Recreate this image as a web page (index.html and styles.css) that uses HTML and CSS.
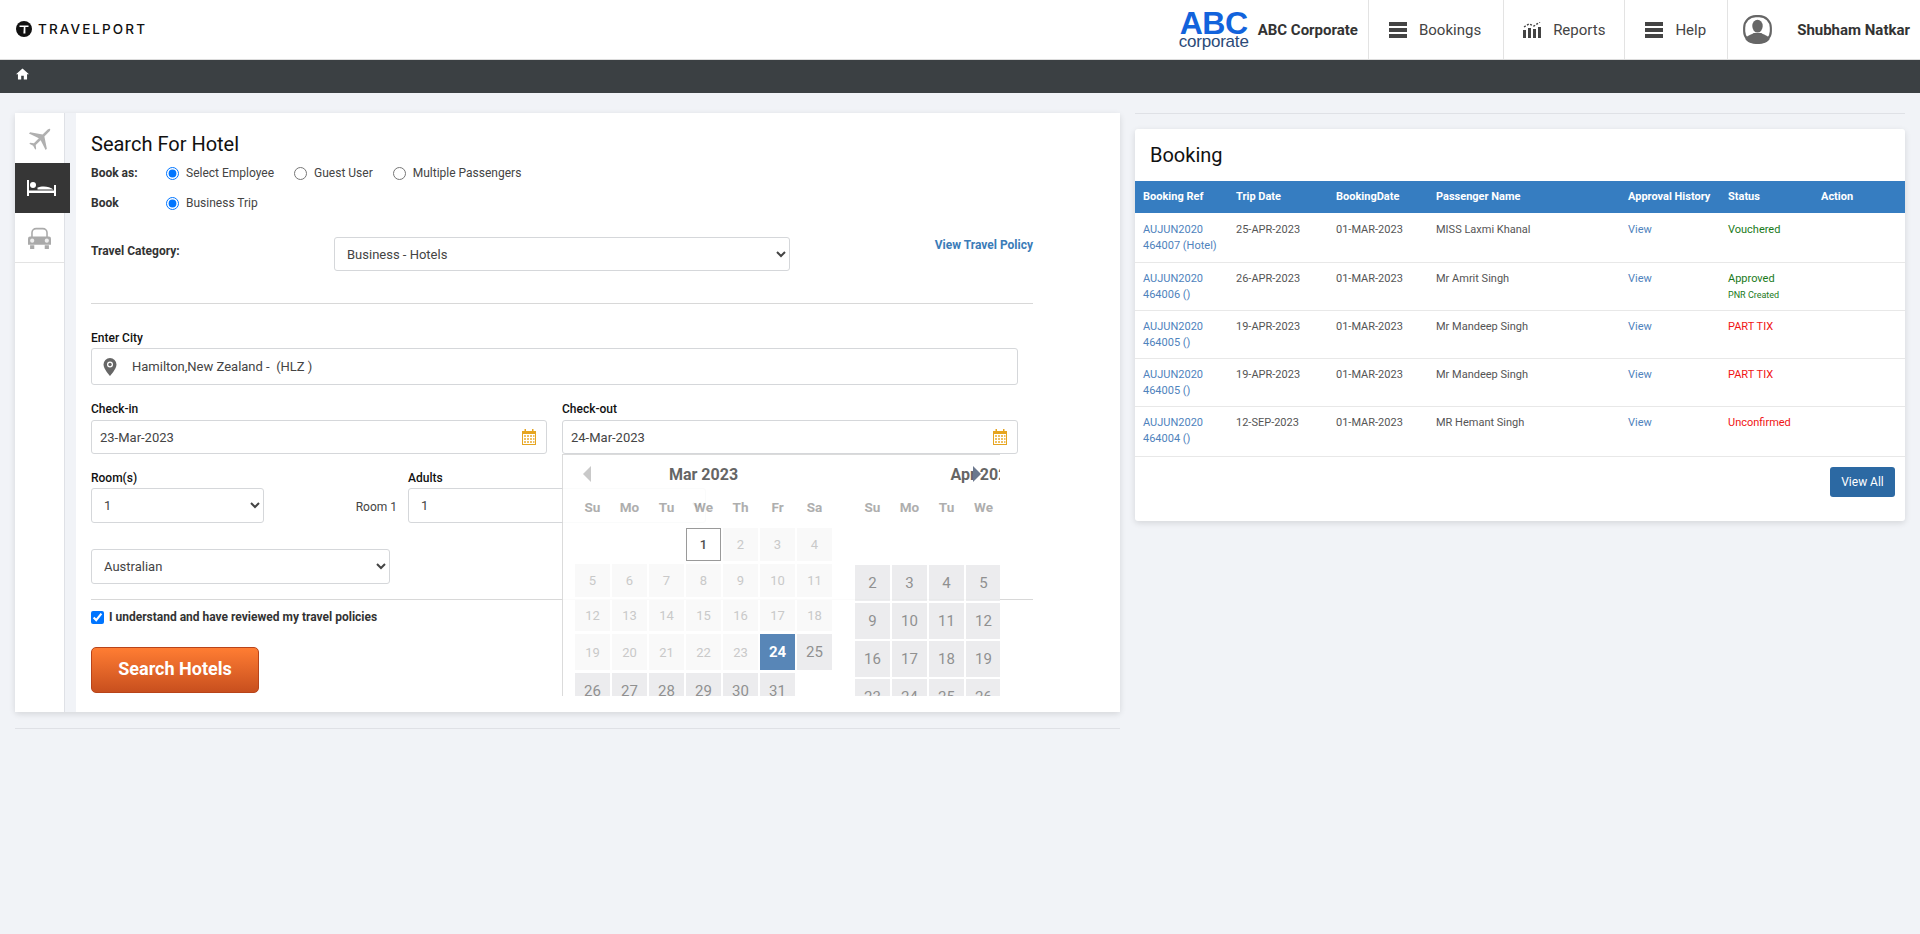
FILE: index.html
```html
<!DOCTYPE html>
<html lang="en">
<head>
<meta charset="utf-8">
<title>Search For Hotel</title>
<link rel="stylesheet" href="styles.css">
</head>
<body>
<header class="topbar">
  <div class="brand">
    <svg class="brand-mark" viewBox="0 0 16 16"><circle cx="8" cy="8" r="8" fill="#111"/><path d="M3.5 4.5h9v1.6H9.4v6.4H7.4l.4-6.4H3.5z" fill="#fff"/></svg>
    <span class="brand-name">TRAVELPORT</span>
  </div>
  <div class="top-right">
    <div class="corp">
      <div class="corp-logo"><span class="abc">ABC</span><span class="corporate">corporate</span></div>
      <span class="corp-name">ABC Corporate</span>
    </div>
    <a class="nav-item nav-bookings"><svg class="nav-icon" viewBox="0 0 18 16"><path d="M0 0h18v4H0zM0 6h18v4H0zM0 12h18v4H0z" fill="#444"/></svg>Bookings</a>
    <a class="nav-item nav-reports"><svg class="nav-icon" viewBox="0 0 18 16"><path d="M0 8h3v8H0zM5 6h3v10H5zM10 7h3v9h-3zM15 5h3v11h-3z" fill="#444"/><path d="M1 5l5-3 5 2 6-4" fill="none" stroke="#444" stroke-width="1.4" stroke-dasharray="2 1.5"/></svg>Reports</a>
    <a class="nav-item nav-help"><svg class="nav-icon" viewBox="0 0 18 16"><path d="M0 0h18v4H0zM0 6h18v4H0zM0 12h18v4H0z" fill="#444"/></svg>Help</a>
    <div class="user">
      <svg class="avatar" viewBox="0 0 30 30"><rect x="1.2" y="1.2" width="27.6" height="27.6" rx="12" fill="#fff" stroke="#666" stroke-width="2.2"/><ellipse cx="15" cy="11.5" rx="5.4" ry="6.6" fill="#666"/><path d="M2.5 25c1-4 6-4.500 8.500-6.500h8c2.500 2 7.500 2.500 8.500 6.500-2 3-5 3.800-7 3.800H9.500c-2 0-5-.8-7-3.800z" fill="#666"/></svg>
      <span class="user-name">Shubham Natkar</span>
    </div>
  </div>
</header>
<div class="crumbbar">
  <svg class="home" viewBox="2 3 20 17"><path d="M10 20v-6h4v6h5v-8h3L12 3 2 12h3v8z" fill="#fff"/></svg>
</div>

<main class="page">
  <section class="left-col">
    <div class="search-card">
      <nav class="tabs">
        <a class="tab"><svg class="i-plane" viewBox="0 0 24 24"><path transform="rotate(45 12 12)" d="M12 1c.8 0 1.100 1.500 1.100 3v5l9 6v1.500l-9-3v6l2.500 2v1l-3.600-1-3.600 1v-1l2.500-2v-6l-9 3V15l9-6V4c0-1.500.3-3 1.100-3z" fill="#b0b0b0"/></svg></a>
        <a class="tab tab-active"><svg class="i-bed" viewBox="0 0 29 16"><path d="M0 0h2v16H0zM27 5h2v11h-2zM0 10.500h29v2.500H0z" fill="#fff"/><circle cx="6" cy="5" r="3" fill="#fff"/><path d="M10.500 7.500C14 6 22 5.500 26.500 9.500H10.500z" fill="#fff"/></svg></a>
        <a class="tab"><svg class="i-car" viewBox="0 0 22 22"><path d="M3.800 11V6.500A4 4 0 0 1 7.800 2.500h6.400a4 4 0 0 1 4 4V11" fill="none" stroke="#aaa" stroke-width="1.500"/><path d="M2 10h18a2 2 0 0 1 2 2v6H0v-6a2 2 0 0 1 2-2z" fill="#aaa"/><circle cx="4" cy="14" r="2" fill="#eee"/><circle cx="18" cy="14" r="2" fill="#eee"/><path d="M2 18.500h4V22H2zM16 18.500h4V22h-4z" fill="#aaa"/></svg></a>
      </nav>
      <form class="form">
        <h2 class="form-title">Search For Hotel</h2>
        <div class="radio-row">
          <span class="radio-label">Book as:</span>
          <label class="radio"><input type="radio" name="who" checked>Select Employee</label>
          <label class="radio"><input type="radio" name="who">Guest User</label>
          <label class="radio"><input type="radio" name="who">Multiple Passengers</label>
        </div>
        <div class="radio-row radio-row-2">
          <span class="radio-label">Book</span>
          <label class="radio"><input type="radio" name="trip" checked>Business Trip</label>
        </div>
        <div class="category-row">
          <span class="category-label">Travel Category:</span>
          <select class="control category-select"><option>Business - Hotels</option></select>
          <a class="policy-link">View Travel Policy</a>
        </div>
        <hr class="rule rule-top">
        <label class="field-label city-label">Enter City</label>
        <div class="control city-input">
          <svg class="i-pin" viewBox="0 0 14 18"><path fill-rule="evenodd" d="M7 0a6.500 6.500 0 0 1 6.500 6.500C13.500 11 7 18 7 18S.5 11 .5 6.500A6.500 6.500 0 0 1 7 0zm0 3.500a3 3 0 1 0 0 6 3 3 0 0 0 0-6z" fill="#666"/><circle cx="7" cy="6.500" r="1.700" fill="#666"/></svg>
          <span>Hamilton,New Zealand -&nbsp; (HLZ )</span>
        </div>
        <div class="dates">
          <div class="date-col">
            <label class="field-label">Check-in</label>
            <div class="control date-input"><span>23-Mar-2023</span>
              <svg class="i-cal" viewBox="0 0 14 16"><path fill-rule="evenodd" d="M0 2h2.500V0h1.500v2h6V0h1.500v2H14v14H0zM1 5v10h12V5z" fill="#e6a520"/><path d="M2 6h2v2H2zM5 6h2v2H5zM8 6h2v2H8zM11 6h1.500v2H11zM2 9h2v2H2zM5 9h2v2H5zM8 9h2v2H8zM11 9h1.500v2H11zM2 12h2v2H2zM5 12h2v2H5zM8 12h2v2H8zM11 12h1.500v2H11z" fill="#efc060"/></svg>
            </div>
          </div>
          <div class="date-col checkout">
            <label class="field-label">Check-out</label>
            <div class="control date-input"><span>24-Mar-2023</span>
              <svg class="i-cal" viewBox="0 0 14 16"><path fill-rule="evenodd" d="M0 2h2.500V0h1.500v2h6V0h1.500v2H14v14H0zM1 5v10h12V5z" fill="#e6a520"/><path d="M2 6h2v2H2zM5 6h2v2H5zM8 6h2v2H8zM11 6h1.500v2H11zM2 9h2v2H2zM5 9h2v2H5zM8 9h2v2H8zM11 9h1.500v2H11zM2 12h2v2H2zM5 12h2v2H5zM8 12h2v2H8zM11 12h1.500v2H11z" fill="#efc060"/></svg>
            </div>
            <div class="picker">
              <span class="arrow arrow-prev"></span>
              <span class="arrow arrow-next"></span>
              <div class="month">
                <div class="month-title">Mar 2023</div>
                <div class="weekdays"><span>Su</span><span>Mo</span><span>Tu</span><span>We</span><span>Th</span><span>Fr</span><span>Sa</span></div>
                <div class="days days-mar">
                  <span></span><span></span><span></span>
                  <span class="today">1</span><span class="off">2</span><span class="off">3</span><span class="off">4</span>
                  <span class="off">5</span><span class="off">6</span><span class="off">7</span><span class="off">8</span><span class="off">9</span><span class="off">10</span><span class="off">11</span>
                  <span class="off">12</span><span class="off">13</span><span class="off">14</span><span class="off">15</span><span class="off">16</span><span class="off">17</span><span class="off">18</span>
                  <span class="off">19</span><span class="off">20</span><span class="off">21</span><span class="off">22</span><span class="off">23</span><span class="sel">24</span><span class="on">25</span>
                  <span class="on">26</span><span class="on">27</span><span class="on">28</span><span class="on">29</span><span class="on">30</span><span class="on">31</span><span></span>
                </div>
              </div>
              <div class="month">
                <div class="month-title">Apr 2023</div>
                <div class="weekdays"><span>Su</span><span>Mo</span><span>Tu</span><span>We</span><span>Th</span><span>Fr</span><span>Sa</span></div>
                <div class="days days-apr">
                  <span></span><span></span><span></span><span></span><span></span><span></span><span class="on">1</span>
                  <span class="on">2</span><span class="on">3</span><span class="on">4</span><span class="on">5</span><span class="on">6</span><span class="on">7</span><span class="on">8</span>
                  <span class="on">9</span><span class="on">10</span><span class="on">11</span><span class="on">12</span><span class="on">13</span><span class="on">14</span><span class="on">15</span>
                  <span class="on">16</span><span class="on">17</span><span class="on">18</span><span class="on">19</span><span class="on">20</span><span class="on">21</span><span class="on">22</span>
                  <span class="on">23</span><span class="on">24</span><span class="on">25</span><span class="on">26</span><span class="on">27</span><span class="on">28</span><span class="on">29</span>
                </div>
              </div>
            </div>
          </div>
        </div>
        <div class="rooms">
          <label class="field-label rooms-l1">Room(s)</label>
          <label class="field-label rooms-l2">Adults</label>
          <select class="control rooms-select"><option>1</option></select>
          <span class="room-name">Room 1</span>
          <select class="control rooms-select"><option>1</option></select>
        </div>
        <select class="control nationality"><option>Australian</option></select>
        <hr class="rule rule-bottom">
        <label class="policy-check"><input type="checkbox" checked>I understand and have reviewed my travel policies</label>
        <button type="button" class="search-btn">Search Hotels</button>
      </form>
    </div>
    <hr class="page-rule">
  </section>

  <section class="right-col">
    <hr class="page-rule page-rule-top">
    <div class="booking-card">
      <h2 class="booking-title">Booking</h2>
      <table class="booking-table">
        <colgroup><col class="c1"><col class="c2"><col class="c3"><col class="c4"><col class="c5"><col class="c6"><col class="c7"></colgroup>
        <thead>
          <tr><th>Booking Ref</th><th>Trip Date</th><th>BookingDate</th><th>Passenger Name</th><th>Approval History</th><th>Status</th><th>Action</th></tr>
        </thead>
        <tbody>
          <tr><td><a>AUJUN2020<br>464007 (Hotel)</a></td><td>25-APR-2023</td><td>01-MAR-2023</td><td>MISS Laxmi Khanal</td><td><a>View</a></td><td class="green">Vouchered</td><td></td></tr>
          <tr><td><a>AUJUN2020<br>464006 ()</a></td><td>26-APR-2023</td><td>01-MAR-2023</td><td>Mr Amrit Singh</td><td><a>View</a></td><td class="green">Approved<br><small>PNR Created</small></td><td></td></tr>
          <tr><td><a>AUJUN2020<br>464005 ()</a></td><td>19-APR-2023</td><td>01-MAR-2023</td><td>Mr Mandeep Singh</td><td><a>View</a></td><td class="red">PART TIX</td><td></td></tr>
          <tr><td><a>AUJUN2020<br>464005 ()</a></td><td>19-APR-2023</td><td>01-MAR-2023</td><td>Mr Mandeep Singh</td><td><a>View</a></td><td class="red">PART TIX</td><td></td></tr>
          <tr><td><a>AUJUN2020<br>464004 ()</a></td><td>12-SEP-2023</td><td>01-MAR-2023</td><td>MR Hemant Singh</td><td><a>View</a></td><td class="red">Unconfirmed</td><td></td></tr>
        </tbody>
      </table>
      <div class="booking-foot"><button type="button" class="view-all">View All</button></div>
    </div>
  </section>
</main>
</body>
</html>
```
FILE: styles.css
```css
* { box-sizing: border-box; }
html, body { margin: 0; padding: 0; }
body {
  min-height: 934px;
  background: #f1f3f7;
  font-family: Roboto, "Liberation Sans", sans-serif;
  font-size: 12px;
  color: #333;
}

/* top bar */
.topbar {
  display: flex;
  align-items: stretch;
  justify-content: space-between;
  height: 60px;
  background: #fff;
  border-bottom: 1px solid #dcdcdc;
}
.brand { display: flex; align-items: center; gap: 6px; padding-left: 16px; padding-bottom: 1px; }
.brand-mark { width: 16px; height: 16px; }
.brand-name {
  font-family: Inter, Roboto, sans-serif;
  font-weight: 500;
  font-size: 13.5px;
  letter-spacing: 2.1px;
  color: #111;
}
.top-right { display: flex; align-items: stretch; }
.corp { display: flex; align-items: center; padding-right: 10px; border-right: 1px solid #e3e3e3; }
.corp-logo { display: flex; flex-direction: column; align-items: center; width: 72px; margin-right: 8px; font-family: "Liberation Sans", Arial, sans-serif; }
.abc { font-size: 32px; line-height: 23px; font-weight: 700; color: #1263dc; margin-top: 2px; letter-spacing: -.5px; }
.corporate { font-size: 17px; line-height: 14px; color: #2b4a78; letter-spacing: -.2px; }
.corp-name { font-size: 15px; font-weight: 700; color: #333; }
.nav-item {
  display: flex;
  align-items: center;
  gap: 12px;
  padding: 0 21px 0 20px;
  font-size: 15px;
  color: #444;
  border-right: 1px solid #e3e3e3;
}
.nav-bookings { padding: 0 22px 0 20px; }
.nav-reports { padding: 0 19px; }
.nav-icon { width: 18px; height: 16px; }
.user { display: flex; align-items: center; padding: 0 10px 0 15px; }
.avatar { width: 29px; height: 29px; margin-right: 25px; }
.user-name { font-size: 15px; font-weight: 700; color: #333; }

.crumbbar {
  display: flex;
  align-items: flex-start;
  height: 33px;
  padding: 8px 0 0 16px;
  background: #3b4043;
}
.home { width: 13px; height: 12px; }

/* page */
.page {
  display: flex;
  align-items: flex-start;
  padding: 20px 15px 0;
  gap: 15px;
}
.left-col { width: 1105px; flex: none; }
.right-col { width: 770px; flex: none; }

.page-rule { border: 0; height: 1px; margin: 16px 0 0; background: #dfe1e6; }
.page-rule-top { margin: 0 0 15px; }

/* search card */
.search-card {
  display: flex;
  height: 599px;
  background: #f1f3f7;
  border-radius: 3px;
  box-shadow: 0 2px 6px rgba(0, 0, 0, .12);
}
.tabs {
  flex: none;
  width: 50px;
  background: #fff;
  border-right: 1px solid #dfe1e6;
  margin-right: 11px;
}
.tab {
  display: flex;
  align-items: center;
  justify-content: center;
  height: 50px;
}
.tab:last-child { border-bottom: 1px solid #e3e3e3; }
.tab-active { width: 55px; background: #363636; padding-right: 2px; }
.i-plane { width: 28px; height: 28px; margin-left: 2px; }
.i-bed { width: 29px; height: 16px; }
.i-car { width: 23px; height: 23px; }

.form {
  flex: 1;
  min-width: 0;
  background: #fff;
  padding: 19px 87px 0 15px;
}
.form-title { margin: 0; font-size: 20px; line-height: 24px; font-weight: 400; color: #111; }
.radio-row { display: flex; align-items: center; height: 22px; margin-top: 6px; }
.radio-row-2 { margin-top: 8px; }
.radio-label { width: 75px; font-weight: 700; color: #333; }
.radio { display: flex; align-items: center; margin-right: 20px; color: #444; }
.radio input { width: 13px; height: 13px; margin: 0 7px 0 0; }

.control {
  display: block;
  border: 1px solid #d5d7da;
  border-radius: 3px;
  background: #fff;
  font-family: inherit;
  font-size: 13px;
  color: #444;
}
select.control { padding: 0 8px; }

.category-row { display: flex; align-items: center; margin-top: 23px; }
.category-label { width: 243px; font-weight: 700; color: #333; margin-bottom: 6px; }
.category-select { width: 456px; height: 34px; }
.policy-link { margin-left: auto; margin-bottom: 19px; font-weight: 700; color: #3b7cb8; }

.rule { border: 0; height: 1px; background: #d8d8d8; margin: 0; }
.rule-top { margin-top: 32px; }
.rule-bottom { margin-top: 15px; }

.field-label { display: block; font-weight: 500; line-height: 16px; color: #111; }
.city-label { margin-top: 26px; }
.city-input {
  display: flex;
  align-items: center;
  width: 927px;
  height: 37px;
  margin-top: 2px;
  padding-left: 11px;
}
.i-pin { width: 14px; height: 18px; margin-right: 15px; }

.dates { display: flex; gap: 15px; width: 927px; margin-top: 16px; }
.date-col { flex: 1; min-width: 0; }
.checkout { position: relative; z-index: 2; }
.date-input {
  display: flex;
  align-items: center;
  justify-content: space-between;
  height: 34px;
  margin-top: 3px;
  padding: 0 10px 0 8px;
}
.i-cal { width: 14px; height: 16px; }

/* date picker */
.picker {
  position: absolute;
  top: 53px;
  left: 0;
  display: flex;
  gap: 23px;
  width: 438px;
  height: 242px;
  padding-left: 12px;
  overflow: hidden;
  background: #fff;
  border-left: 1px solid #d8d8d8;
  border-top: 1px solid #d8d8d8;
  opacity: .9;
}
.month { flex: none; width: 257px; }
.month-title { height: 39px; padding-top: 10px; line-height: 20px; text-align: center; font-size: 16px; font-weight: 700; color: #555; }
.weekdays { display: grid; grid-template-columns: repeat(7, 35px); column-gap: 2px; height: 26px; line-height: 26px; text-align: center; font-size: 13.5px; font-weight: 700; color: #a6a6a6; }
.days { display: grid; grid-template-columns: repeat(7, 35px); column-gap: 2px; text-align: center; }
.days span { display: flex; align-items: center; justify-content: center; }
.days-mar { margin-top: 8px; grid-template-rows: 33px 33px 31px 36px 36px; row-gap: 3px; }
.days-apr { margin-top: 7px; grid-auto-rows: 36px; row-gap: 2px; }
.off { background: #f9f9f9; color: #c4c4c4; font-size: 13px; }
.on { background: #eaebed; color: #858585; font-size: 15px; }
.sel { background: #4679b0; color: #fff; font-size: 15px; font-weight: 700; }
.today { border: 1px solid #909090; color: #3c3c3c; font-size: 13px; font-weight: 500; }
.arrow {
  position: absolute;
  top: 11px;
  width: 0;
  height: 0;
  border-top: 8px solid transparent;
  border-bottom: 8px solid transparent;
}
.arrow-prev { left: 20px; border-right: 8px solid #c4c4c4; }
.arrow-next { left: 410px; border-left: 8px solid #5c6a82; }

/* rooms */
.rooms {
  display: grid;
  grid-template-columns: 173px 144px 298px;
  align-items: center;
  margin-top: 16px;
}
.rooms-l1 { grid-column: 1; }
.rooms-l2 { grid-column: 3; }
.rooms-select { height: 35px; margin-top: 2px; width: 100%; }
.room-name { text-align: right; padding: 4px 11px 0 0; color: #444; }
.nationality { width: 299px; height: 35px; margin-top: 26px; }

.policy-check { display: flex; align-items: center; margin-top: 10px; height: 14px; font-weight: 700; color: #333; }
.policy-check input { width: 13px; height: 13px; margin: 0 5px 0 0; }

.search-btn {
  display: block;
  width: 168px;
  height: 46px;
  margin-top: 23px;
  border: 1px solid #b8441a;
  border-radius: 5px;
  background: linear-gradient(#ff7d33, #c84f1e);
  color: #fff;
  font-family: inherit;
  font-size: 18px;
  font-weight: 700;
  padding-bottom: 5px;
}

/* booking card */
.booking-card {
  height: 392px;
  background: #fff;
  border-radius: 3px;
  box-shadow: 0 2px 6px rgba(0, 0, 0, .12);
}
.booking-title { margin: 0; height: 52px; padding: 14px 0 0 15px; font-size: 20px; line-height: 24px; font-weight: 400; color: #111; }
.booking-table { width: 770px; table-layout: fixed; border-collapse: collapse; font-size: 11px; line-height: 16px; }
.c1 { width: 101px; }
.c2, .c3, .c5 { width: 100px; }
.c4 { width: 192px; }
.c6 { width: 93px; }
.c7 { width: 84px; }
.booking-table th { height: 32px; padding: 0 0 0 8px; background: #367dc1; color: #fff; text-align: left; font-weight: 700; }
.booking-table td { padding: 8px 0 7px 8px; vertical-align: top; color: #555; border-top: 1px solid #e8e8e8; }
.booking-table th + th, .booking-table td + td { padding-left: 0; }
.booking-table tbody tr:first-child td { border-top: 1px solid #fff; padding-bottom: 8px; }
.booking-table tbody tr:last-child td { border-bottom: 1px solid #e8e8e8; padding-bottom: 9px; }
.booking-table a { color: #4f83bd; }
.booking-table .green { color: #1a7a1a; }
.booking-table .red { color: #f01414; }
.booking-table small { font-size: 9px; }
.booking-foot { display: flex; justify-content: flex-end; padding: 10px 10px 0 0; }
.view-all {
  width: 65px;
  height: 30px;
  border: 0;
  border-radius: 3px;
  background: #2c69a3;
  color: #fff;
  font-family: inherit;
  font-size: 12px;
}
```
